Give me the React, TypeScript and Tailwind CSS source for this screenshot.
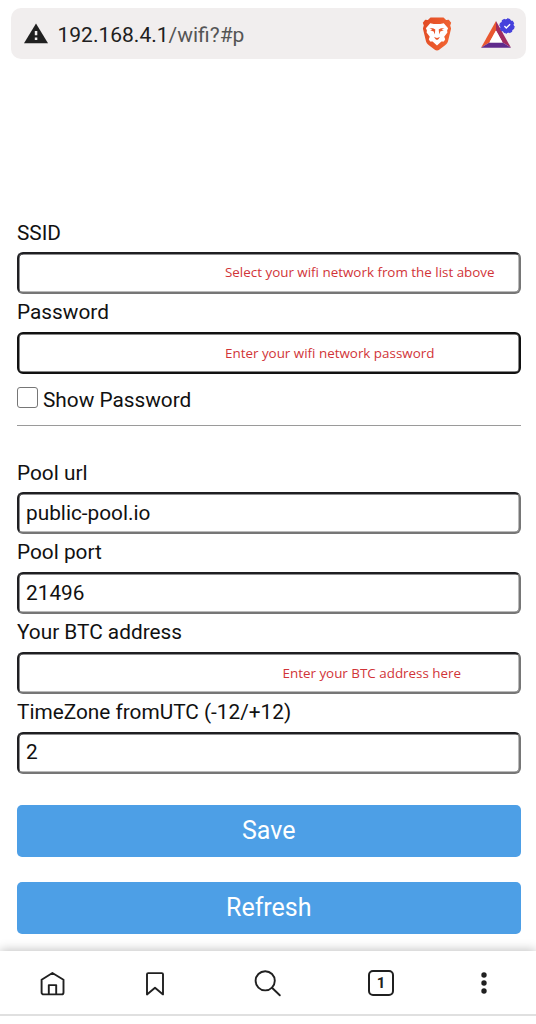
import type { ReactNode } from "react";

function Warning() {
  return (
    <svg className="ml-[13px] h-[22px] w-6 shrink-0" viewBox="0 0 24 22">
      <path d="M12 .4 24 20.2H0Z" fill="#202020" />
      <path d="M10.8 8h2.5v4.2h-2.5zM10.8 14.4h2.5v2.5h-2.5z" fill="#f1eeee" />
    </svg>
  );
}

function BraveLogo() {
  return (
    <svg className="h-[42px] w-[38px]" viewBox="0 0 38 42">
      <defs>
        <linearGradient id="brave" x1="0" y1="0.3" x2="1" y2="0.6">
          <stop offset="0" stopColor="#e24c25" />
          <stop offset="1" stopColor="#f26532" />
        </linearGradient>
      </defs>
      <path
        d="M12.5 4.5h13l2.6 2.6 2.7-.3 2.4 3-1 2.8.9 2.8-2.9 12c-.5 2-1.4 3.5-3.1 4.8l-5.6 4.3c-1.6 1.3-3.4 1.3-5 0l-5.6-4.3c-1.7-1.3-2.6-2.8-3.1-4.8L4.9 15.4l.9-2.8-1-2.8 2.4-3 2.7.3Z"
        fill="url(#brave)"
      />
      <path
        d="m12.2 10.2 3.6.7h6.4l3.6-.7 4.3 5-1 2.3.3 2-3.2 4.2 1 2.6-1.3 2.3-2.5-.2-4.4 4-4.4-4-2.5.2-1.3-2.3 1-2.6-3.2-4.2.3-2-1-2.3Z"
        fill="#fff"
      />
      <path d="m11.4 15.2 3.6 0 2.3 1.4-.5 5-1.1-3-3.5-1.3 2.2-.8Z" fill="#e95429" />
      <path d="m26.6 15.2-3.6 0-2.3 1.4.5 5 1.1-3 3.5-1.3-2.2-.8Z" fill="#ee5d2e" />
      <path d="m16 24 3 1 3-1-1.6 2.3-1.4.7-1.4-.7Z" fill="#ec592c" />
    </svg>
  );
}

function BatLogo() {
  return (
    <svg className="h-[34px] w-[36px]" viewBox="0 0 36 34">
      <path d="M15 4 0 30.7l8.4-5.2L15 13.5Z" fill="#e9572f" />
      <path d="m15 4 15 26.7-8.4-5.2-6.6-12Z" fill="#a02b60" />
      <path d="M0 30.7h30l-8.4-5.2H8.4Z" fill="#602b8c" />
      <path d="m15 13.5 6.6 12H8.4Z" fill="#fff" />
      <circle cx="26" cy="9" r="7" fill="#4540dc" />
      <circle cx="26" cy="9" r="7" fill="none" stroke="#4540dc" strokeWidth="1.3" pathLength="32" strokeDasharray="2.4 1.6" />
      <path d="m23.4 9.1 1.9 1.9 3.8-3.7" fill="none" stroke="#fff" strokeWidth="1.4" />
    </svg>
  );
}

function Label({ children }: { children: ReactNode }) {
  return <label className="block h-[37.75px] text-[20.8px] leading-[37px]">{children}</label>;
}

function Field({ value, hint, className = "", focused = false }: { value?: string; hint?: string; className?: string; focused?: boolean }) {
  return (
    <div
      className={`flex h-[42px] items-center rounded-[6px] border-2 ${focused ? "border-[#111] shadow-[inset_0_0_0_0.5px_#111]" : "border-t-[#1f1f22] border-r-[#767676] border-b-[#767676] border-l-[#1f1f22] shadow-[inset_0.5px_0.5px_0_#1f1f22,inset_-0.5px_-0.5px_0_#767676]"} ${className}`}
    >
      {value && <span className="pb-px pl-[7px] text-[20.8px] leading-6">{value}</span>}
      {hint && <span className="font-['Open_Sans','Noto_Sans',sans-serif] text-[13.4px] leading-5 whitespace-nowrap text-[#d13438]">{hint}</span>}
    </div>
  );
}

function Action({ children }: { children: ReactNode }) {
  return (
    <button className="block h-[52.5px] w-full rounded-[5px] bg-[#4d9fe6] pb-px text-center text-[25px] leading-[51.5px] text-white">
      {children}
    </button>
  );
}

export default function App() {
  return (
    <div className="flex h-[1024px] w-[536px] flex-col overflow-hidden bg-white font-['Roboto','Liberation_Sans',sans-serif] text-[#111]">
      <header className="mt-2 ml-[11px] flex h-[51px] w-[515px] shrink-0 items-center rounded-[10px] bg-[#f1eeee]">
        <Warning />
        <span className="ml-[9.5px] flex-1 pt-[4px] text-[21px] text-[#202020]">
          192.168.4.1<span className="text-[#555]">/wifi?#p</span>
        </span>
        <BraveLogo />
        <span className="mr-[9px] ml-[25px]">
          <BatLogo />
        </span>
      </header>

      <main className="mt-[155.5px] h-[736.5px] shrink-0 pr-[15.5px] pl-[17px]">
        <Label>SSID</Label>
        <Field hint="Select your wifi network from the list above" className="pb-[3px] pl-[206px]" />
        <Label>Password</Label>
        <Field hint="Enter your wifi network password" className="pl-[206px]" focused />
        <div className="flex h-[51px] items-start pt-[13px]">
          <span className="h-[21px] w-[21px] rounded-[3px] border border-[#767676]" />
          <span className="ml-[5px] text-[20.8px] leading-[27px]">Show Password</span>
        </div>
        <hr className="mb-[28.5px] border-t border-[#9a9a9a]" />
        <Label>Pool url</Label>
        <Field value="public-pool.io" />
        <Label>Pool port</Label>
        <Field value="21496" />
        <Label>Your BTC address</Label>
        <Field hint="Enter your BTC address here" className="pl-[263.5px]" />
        <Label>TimeZone fromUTC (-12/+12)</Label>
        <Field value="2" />
        <div className="mt-[31px] flex flex-col gap-[24.5px]">
          <Action>Save</Action>
          <Action>Refresh</Action>
        </div>
      </main>

      <nav className="relative flex h-[65px] shrink-0 items-center border-b-2 border-[#e0e0e0] bg-white text-[#202020] shadow-[0_-1px_10px_rgba(0,0,0,0.25)]">
        <svg className="ml-10 h-[26px] w-[26px]" viewBox="0 0 26 26" fill="none" stroke="currentColor" strokeWidth="1.9" strokeLinejoin="round">
          <path d="M1.6 9.8 12.4 3l11.1 6.8v12.6a2 2 0 0 1-2 2H3.6a2 2 0 0 1-2-2ZM8.8 24.4v-9.3h7.4v9.3" />
        </svg>
        <svg className="ml-[80px] h-[26px] w-[18px]" viewBox="0 0 18 26" fill="none" stroke="currentColor" strokeWidth="1.9" strokeLinejoin="round">
          <path d="M1 4.3a1.2 1.2 0 0 1 1.2-1.2h13.6A1.2 1.2 0 0 1 17 4.3v20.1l-8-6.6-8 6.6Z" />
        </svg>
        <svg className="ml-[90px] h-7 w-7" viewBox="0 0 28 28" fill="none" stroke="currentColor" strokeWidth="1.9" strokeLinecap="round">
          <circle cx="11.2" cy="11.8" r="9.6" />
          <path d="m18 18.8 7.8 7.5" />
        </svg>
        <span className="mt-px ml-[86px] flex h-[26px] w-[26px] items-center justify-center rounded-[5px] border-2 border-current text-[15px] font-bold">1</span>
        <svg className="mt-px ml-[86px] h-6 w-6" viewBox="0 0 24 24" fill="currentColor">
          <circle cx="4" cy="4" r="2.7" />
          <circle cx="4" cy="12" r="2.7" />
          <circle cx="4" cy="20" r="2.7" />
        </svg>
      </nav>
      <div className="relative flex-1 bg-white" />
    </div>
  );
}
